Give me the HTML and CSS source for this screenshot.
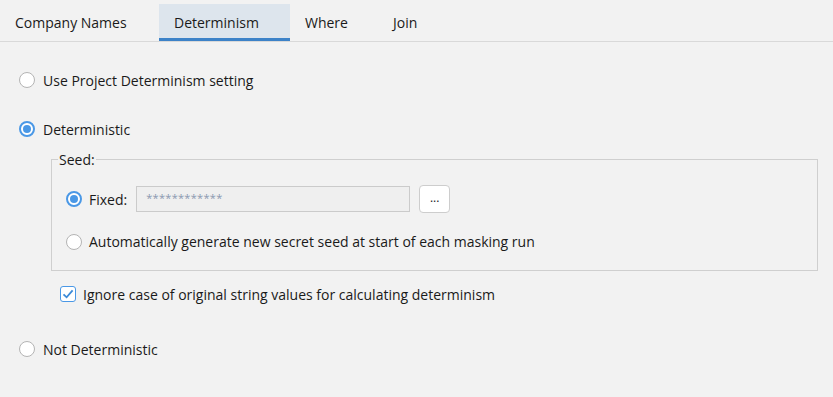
FILE: index.html
```html
<!DOCTYPE html>
<html lang="en">
<head>
  <meta charset="UTF-8">
  <title>Determinism</title>
  <link rel="stylesheet" href="styles.css">
</head>
<body>
  <div class="tabs">
    <div class="tab tab-first">Company Names</div>
    <div class="tab active">Determinism</div>
    <div class="tab tab-where">Where</div>
    <div class="tab tab-join">Join</div>
  </div>

  <div class="content">
    <label class="option">
      <span class="radio"></span>
      Use Project Determinism setting
    </label>

    <label class="option option-det">
      <span class="radio checked"></span>
      Deterministic
    </label>

    <fieldset class="seed">
      <legend>Seed:</legend>
      <div class="seed-row">
        <span class="radio checked"></span>
        <span class="seed-label">Fixed:</span>
        <div class="seed-input">************</div>
        <button class="dots">...</button>
      </div>
      <div class="seed-row seed-auto">
        <span class="radio"></span>
        <span class="seed-label">Automatically generate new secret seed at start of each masking run</span>
      </div>
    </fieldset>

    <label class="check-row">
      <span class="checkbox">
        <svg width="12" height="12" viewBox="0 0 12 12"><path d="M1.5 6.3 L4.6 9.3 L10.6 2.4" fill="none" stroke="#3c8ad8" stroke-width="1.8"/></svg>
      </span>
      Ignore case of original string values for calculating determinism
    </label>

    <label class="option option-not">
      <span class="radio"></span>
      Not Deterministic
    </label>
  </div>
</body>
</html>
```

FILE: styles.css
```css
body {
  margin: 0;
  background: #f2f2f2;
  font-family: 'Open Sans', 'Noto Sans', sans-serif;
  font-size: 14px;
  color: #1a1a1a;
}

.tabs {
  display: flex;
  align-items: flex-end;
  height: 41px;
  border-bottom: 1px solid #d9d9d9;
}

.tab {
  height: 37px;
  line-height: 37px;
  box-sizing: border-box;
}

.tab-first {
  padding-left: 15px;
  width: 159px;
}

.tab.active {
  width: 131px;
  padding-left: 15px;
  background: #dde5ed;
  border-bottom: 3px solid #3c82c8;
}

.tab-where {
  padding-left: 15px;
  width: 103px;
}

.content {
  padding: 0 0 0 19px;
}

.option {
  display: flex;
  align-items: center;
  gap: 8px;
  height: 20px;
  margin-top: 28px;
}

.option-det {
  margin-top: 29px;
}

.option-not {
  margin-top: 35px;
}

.radio {
  width: 14px;
  height: 14px;
  border: 1px solid #b4b4b4;
  border-radius: 50%;
  background: #fff;
  display: inline-flex;
  align-items: center;
  justify-content: center;
  flex: none;
}

.radio.checked {
  border: 2px solid #4a98e6;
  width: 12px;
  height: 12px;
}

.radio.checked::after {
  content: "";
  width: 8px;
  height: 8px;
  border-radius: 50%;
  background: #4a98e6;
}

.seed {
  margin: 11px 15px 0 32px;
  padding: 16px 0 19px 14px;
  border: 1px solid #cfcfcf;
}

.seed legend {
  padding: 0 1px;
  margin-left: -8px;
}

.seed-row {
  display: flex;
  align-items: center;
  gap: 7px;
}

.seed-auto {
  margin-top: 19px;
}

.seed-input {
  width: 274px;
  height: 26px;
  box-sizing: border-box;
  margin-left: 2px;
  border: 1px solid #cbcbcb;
  background: #efefef;
  color: #8a98b0;
  font-size: 11px;
  padding-left: 9px;
  line-height: 22px;
  letter-spacing: 0.3px;
}

.dots {
  margin-left: 2px;
  width: 31px;
  height: 28px;
  border: 1px solid #cdcdcd;
  border-radius: 4px;
  background: #fff;
  font-family: inherit;
  font-size: 12px;
  padding: 0 0 4px;
  color: #222;
}

.check-row {
  display: flex;
  align-items: center;
  gap: 7px;
  margin: 13px 0 0 41px;
  height: 20px;
}

.checkbox {
  width: 14px;
  height: 14px;
  border: 1px solid #4a98e6;
  border-radius: 3px;
  background: #fff;
  display: inline-flex;
  align-items: center;
  justify-content: center;
}
```
